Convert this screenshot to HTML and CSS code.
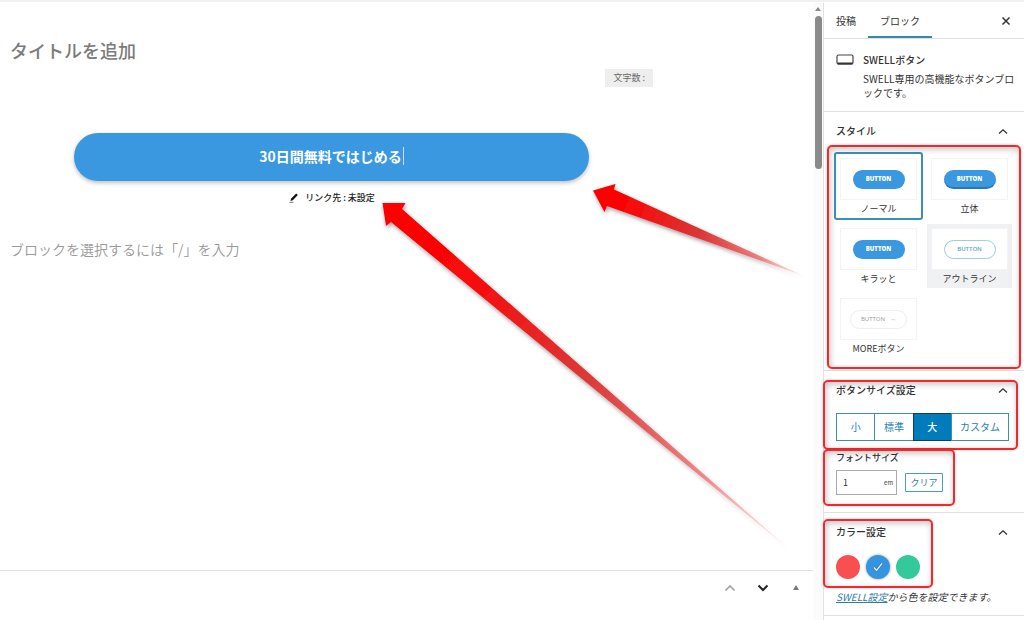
FILE: index.html
```html
<!DOCTYPE html>
<html lang="ja">
<head>
<meta charset="utf-8">
<title>投稿を編集</title>
<link rel="stylesheet" href="styles.css">
</head>
<body>
<div class="app">
  <main class="editor">
    <div class="canvas">
      <h1 class="post-title">タイトルを追加</h1>
      <div class="count-row"><span class="count">文字数 :</span></div>
      <div class="button-block">
        <button type="button" class="cta">30日間無料ではじめる<span class="caret"></span></button>
        <button type="button" class="link-target">
          <svg class="pencil" viewBox="0 0 12 12" aria-hidden="true"><path d="M2.5 9 3.2 6.6 8.2 1.5 9.8 3 4.8 8.2Z" fill="#111"/><path d="M1.5 10.3h4" stroke="#777"/></svg>
          リンク先 : 未設定
        </button>
      </div>
      <p class="placeholder">ブロックを選択するには「/」を入力</p>
    </div>
    <footer class="metabar">
      <button type="button" class="icon-button" aria-label="上に移動"><svg width="12" height="8" viewBox="0 0 12 8"><path d="M1.5 6.5 6 2l4.500 4.500" fill="none" stroke="#a5a5a5" stroke-width="1.700"/></svg></button>
      <button type="button" class="icon-button" aria-label="下に移動"><svg width="12" height="8" viewBox="0 0 12 8"><path d="M1.500 1.500 6 6l4.500-4.500" fill="none" stroke="#222" stroke-width="2"/></svg></button>
      <button type="button" class="icon-button" aria-label="パネルを切り替え"><svg width="12" height="8" viewBox="0 0 12 8"><path d="M3 6 6 1l3 5z" fill="#777"/></svg></button>
    </footer>
  </main>
  <div class="scrollbar">
    <svg width="8" height="6" viewBox="0 0 8 6" aria-hidden="true"><path d="M1 5 4 1l3 4z" fill="#888"/></svg>
    <div class="thumb"></div>
  </div>
  <aside class="sidebar">
    <div class="tabs">
      <button type="button" class="tab">投稿</button>
      <button type="button" class="tab tab-active">ブロック</button>
      <button type="button" class="close" aria-label="閉じる"><svg width="10" height="10" viewBox="0 0 10 10"><path d="m1.500 1.500 7 7m0-7-7 7" stroke="#333" stroke-width="1.500"/></svg></button>
    </div>
    <section class="card">
      <svg class="card-icon" width="18" height="12" viewBox="0 0 18 12" aria-hidden="true"><rect x="1" y="1" width="16" height="9" rx="1.500" fill="#fff" stroke="#444" stroke-width="1.200"/><path d="M1.500 9.500h15" stroke="#333" stroke-width="2"/></svg>
      <div>
        <h2 class="card-title">SWELLボタン</h2>
        <p class="card-text">SWELL専用の高機能なボタンブロックです。</p>
      </div>
    </section>
    <section class="panel panel-styles">
      <button type="button" class="panel-head">スタイル<svg class="chevron" viewBox="0 0 10 7"><path d="M1 5.500 5 1.800l4 3.700" /></svg></button>
      <div class="styles">
        <button type="button" class="style style-selected"><span class="preview"><span class="pill">BUTTON</span></span>ノーマル</button>
        <button type="button" class="style"><span class="preview"><span class="pill pill-solid">BUTTON</span></span>立体</button>
        <button type="button" class="style"><span class="preview"><span class="pill">BUTTON</span></span>キラッと</button>
        <button type="button" class="style style-hover"><span class="preview"><span class="pill pill-outline">BUTTON</span></span>アウトライン</button>
        <button type="button" class="style"><span class="preview"><span class="pill pill-more">BUTTON<span class="arrow">→</span></span></span>MOREボタン</button>
      </div>
      <div class="mark mark-styles"></div>
    </section>
    <section class="panel panel-size">
      <div class="size-group">
        <button type="button" class="panel-head">ボタンサイズ設定<svg class="chevron" viewBox="0 0 10 7"><path d="M1 5.500 5 1.800l4 3.700" /></svg></button>
        <div class="sizes">
          <button type="button" class="size">小</button>
          <button type="button" class="size">標準</button>
          <button type="button" class="size size-active">大</button>
          <button type="button" class="size size-wide">カスタム</button>
        </div>
        <div class="mark mark-size"></div>
      </div>
      <div class="font-group">
        <label class="font-label" for="font-size">フォントサイズ</label>
        <div class="font-row">
          <span class="unit-field"><input id="font-size" type="text" value="1"><span class="unit">em</span></span>
          <button type="button" class="clear">クリア</button>
        </div>
        <div class="mark mark-font"></div>
      </div>
    </section>
    <section class="panel panel-color">
      <button type="button" class="panel-head">カラー設定<svg class="chevron" viewBox="0 0 10 7"><path d="M1 5.500 5 1.800l4 3.700" /></svg></button>
      <div class="swatches">
        <button type="button" class="swatch red" aria-label="赤"></button>
        <button type="button" class="swatch blue" aria-label="青"><svg width="12" height="12" viewBox="0 0 12 12"><path d="m2 6.500 2.500 3 5.500-7" fill="none" stroke="#2c70a8" stroke-width="2.600"/><path d="m2 6.500 2.500 3 5.500-7" fill="none" stroke="#eee" stroke-width="1.300"/></svg></button>
        <button type="button" class="swatch green" aria-label="緑"></button>
      </div>
      <p class="help"><a href="#">SWELL設定</a>から色を設定できます。</p>
      <div class="mark mark-color"></div>
    </section>
  </aside>
</div>
<svg class="arrows" width="824" height="570" viewBox="0 0 824 570" aria-hidden="true">
  <defs>
    <linearGradient id="fade-short" gradientUnits="userSpaceOnUse" x1="593" y1="190" x2="804" y2="276">
      <stop offset="0" stop-color="#f00"/><stop offset=".15" stop-color="#fa0505"/><stop offset=".5" stop-color="#da3636"/><stop offset=".8" stop-color="#e44" stop-opacity=".6"/><stop offset="1" stop-color="#f66" stop-opacity=".1"/>
    </linearGradient>
    <linearGradient id="fade-long" gradientUnits="userSpaceOnUse" x1="383" y1="203" x2="789" y2="549">
      <stop offset="0" stop-color="#f00"/><stop offset=".2" stop-color="#f80808"/><stop offset=".5" stop-color="#dc3838"/><stop offset=".8" stop-color="#e44" stop-opacity=".55"/><stop offset="1" stop-color="#f66" stop-opacity=".1"/>
    </linearGradient>
    <filter id="shade" x="-10%" y="-10%" width="120%" height="130%"><feDropShadow dx="1" dy="2" stdDeviation="2" flood-color="#000" flood-opacity=".4"/></filter>
  </defs>
  <path filter="url(#shade)" fill="url(#fade-short)" d="M593 190.500 615.500 184 614 189.500 804 276 607 206 604.500 212Z"/>
  <path filter="url(#shade)" fill="url(#fade-long)" d="M382.500 203H405.500L402 209 789 549 391 222 386 226Z"/>
</svg>
</body>
</html>
```
FILE: styles.css
```css
* { box-sizing: border-box; }
body {
  margin: 0;
  color: #333;
  background: #fff;
  font-family: "Noto Sans CJK JP", sans-serif;
  font-size: 9px;
  line-height: 14px;
}
button, input { font: inherit; color: inherit; }
button { padding: 0; border: 0; background: none; cursor: pointer; }
h1, h2, p { margin: 0; }

.app {
  display: flex;
  min-height: 100vh;
  padding-top: 1px;
  border-top: 2px solid #f0f0f0;
}
.editor {
  display: flex;
  flex: 1;
  flex-direction: column;
}
.canvas { flex: 1; padding: 34px 160px 0 10px; }
.post-title {
  color: #7b7b7b;
  font-size: 18px;
  font-weight: 500;
  line-height: 26px;
}
.count-row { display: flex; justify-content: flex-end; margin-top: 6px; }
.count {
  padding: 2px 8px;
  color: #666;
  background: #eee;
}
.button-block {
  display: flex;
  flex-direction: column;
  align-items: center;
  margin-top: 46px;
}
.cta {
  display: flex;
  align-items: center;
  justify-content: center;
  width: 80%;
  height: 48px;
  padding-bottom: 2px;
  border-radius: 24px;
  color: #fff;
  background: #3998e0;
  box-shadow: 0 2px 4px rgba(0, 0, 0, .25);
  font-size: 14px;
  font-weight: 700;
}
.caret { width: 1px; height: 18px; margin-left: 1px; background: #cde; }
.link-target {
  display: flex;
  align-items: center;
  gap: 5px;
  margin-top: 10px;
  color: #222;
  font-weight: 500;
}
.pencil { width: 12px; height: 12px; }
.placeholder {
  margin-top: 34px;
  color: #999;
  font-size: 14px;
  font-weight: 350;
  line-height: 20px;
}
.metabar {
  display: flex;
  justify-content: flex-end;
  align-items: flex-start;
  gap: 21px;
  height: 50px;
  padding: 10px 11px 0 0;
  border-top: 1px solid #e2e2e2;
}
.icon-button { display: flex; padding: 3px 0; }

.scrollbar {
  display: flex;
  flex-direction: column;
  align-items: center;
  gap: 4px;
  width: 10px;
  padding-top: 3px;
  background: #fbfbfb;
}
.thumb { width: 7px; height: 153px; border-radius: 4px; background: #8a8a8a; }

.sidebar { width: 201px; border-left: 1px solid #e2e2e2; }
.tabs {
  display: flex;
  height: 36px;
  border-bottom: 1px solid #e0e0e0;
}
.tab { padding: 0 12px; font-size: 10px; }
.tab-active { border-bottom: 2px solid #3389ac; padding-top: 2px; }
.close { display: flex; align-items: center; margin-left: auto; padding-right: 13px; }
.card {
  display: flex;
  gap: 9px;
  height: 73px;
  padding: 14px 8px 0 12px;
  border-bottom: 1px solid #e0e0e0;
}
.card-icon { flex: none; margin-top: 1px; }
.card-title { font-size: 10px; font-weight: 500; line-height: 14px; }
.card-text { margin-top: 5px; font-size: 10px; line-break: anywhere; }

.panel {
  position: relative;
  padding: 0 12px;
  border-bottom: 1px solid #e0e0e0;
}
.panel-head {
  display: flex;
  align-items: center;
  justify-content: space-between;
  width: 100%;
  height: 38px;
  font-size: 10px;
  font-weight: 500;
}
.chevron { width: 10px; height: 7px; margin-right: 4px; fill: none; stroke: #333; stroke-width: 1.3; }
.panel-styles { padding-bottom: 12px; }
.styles {
  display: grid;
  grid-template-columns: 1fr 1fr;
  gap: 6px;
  padding-top: 4px;
}
.style {
  display: flex;
  flex-direction: column;
  gap: 2px;
  align-items: center;
  height: 64px;
  padding: 4px;
}
.style-selected { border-radius: 1px; outline: 2px solid #3b91b5; }
.style-hover { background: #f0f1f3; }
.preview {
  display: flex;
  flex: none;
  align-items: center;
  justify-content: center;
  width: 100%;
  height: 42px;
  border: 1px solid #f3f3f3;
  background: #fff;
}
.pill {
  width: 52px;
  height: 19px;
  border-radius: 10px;
  color: #fff;
  background: #3998e0;
  font-family: "Open Sans", sans-serif;
  font-size: 6px;
  font-weight: 800;
  line-height: 19px;
  text-align: center;
}
.pill-solid { border-bottom: 2px solid #2c77b1; }
.pill-outline { border: 1px solid #9ccbe3; color: #5aa4cb; background: #fff; font-weight: 600; line-height: 17px; }
.pill-more { width: 57px; border: 1px solid #eee; color: #999; background: #fff; font-weight: 400; line-height: 17px; }
.arrow { margin-left: 5px; }

.size-group, .font-group { position: relative; }
.sizes { display: flex; margin-top: 4px; padding-right: 3px; }
.size {
  flex: 38;
  height: 28px;
  border: 1px solid #3a8fb7;
  color: #2581ae;
  font-size: 10px;
}
.size + .size { margin-left: -1px; }
.size-active { border-color: #123e58; color: #fff; background: #007cba; font-weight: 500; }
.size-wide { flex: 57; }
.font-group { padding: 10px 0 17px; }
.font-label { display: block; font-size: 9px; font-weight: 500; }
.font-row { display: flex; align-items: center; gap: 8px; margin-top: 5px; }
.unit-field {
  display: flex;
  align-items: center;
  width: 61px;
  height: 25px;
  padding: 0 3px 0 6px;
  border: 1px solid #aaa;
}
.unit-field input { flex: 1; width: 100%; padding: 0; border: 0; outline: 0; background: none; }
.unit { font-size: 6px; }
.clear { width: 38px; height: 19px; border: 1px solid #4c9abf; border-radius: 1px; color: #2581ae; line-height: 16px; }

.panel-color { padding-bottom: 11px; }
.swatches { display: flex; gap: 6px; margin-top: 4px; }
.swatch {
  display: flex;
  align-items: center;
  justify-content: center;
  width: 24px;
  height: 24px;
  border-radius: 50%;
}
.red { background: #f94f50; }
.blue { background: #3594e0; box-shadow: 0 0 3px rgba(0, 0, 0, .4); }
.green { background: #33c998; }
.help { margin-top: 11px; font-size: 10px; font-style: italic; }
.help a { color: #307ca4; }

/* Callout frames drawn over the settings they point out */
.mark {
  position: absolute;
  border: 2px solid #f3282c;
  border-radius: 5px;
  box-shadow: 0 0 3px rgba(0, 0, 0, .2), inset 1px 2px 6px rgba(0, 0, 0, .25);
  pointer-events: none;
}
.mark-styles { inset: 33px 3px 1px 3px; }
.mark-size { inset: 9px -6px -9px -13px; }
.mark-font { inset: 8px 57px 6px -13px; }
.mark-color { inset: 6px 91px 27px -1px; }
.arrows { position: absolute; top: 0; left: 0; pointer-events: none; }
```
